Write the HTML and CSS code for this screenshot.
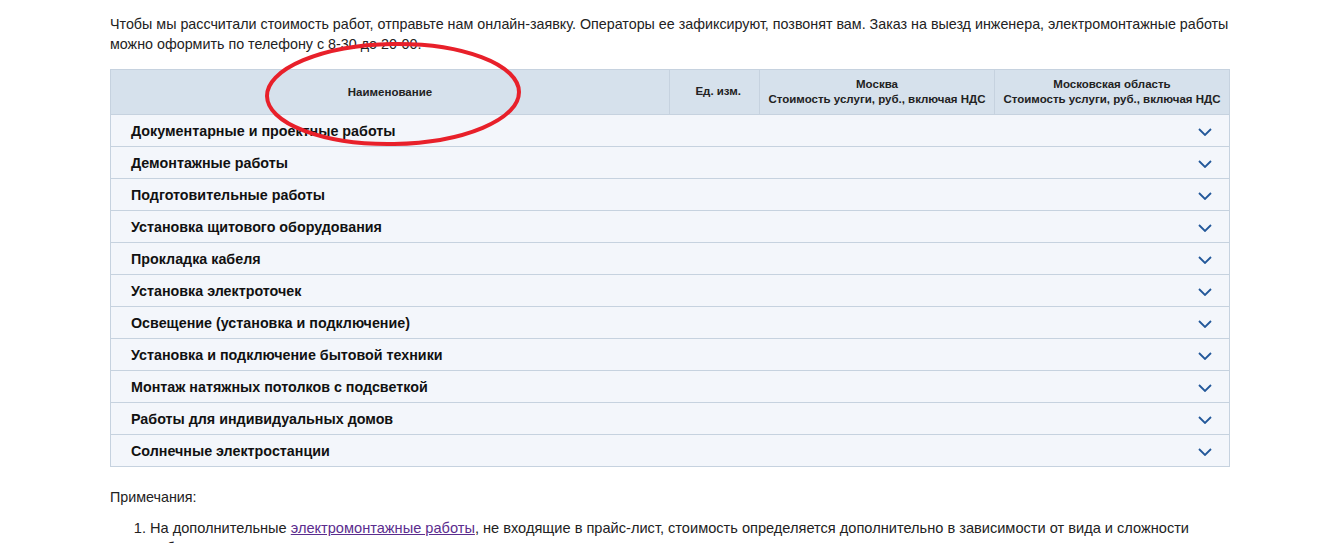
FILE: index.html
```html
<!DOCTYPE html>
<html lang="ru">
<head>
<meta charset="utf-8">
<title>Прайс-лист на электромонтажные работы</title>
<link rel="stylesheet" href="styles.css">
</head>
<body>
<main class="page">
  <p class="intro">Чтобы мы рассчитали стоимость работ, отправьте нам онлайн-заявку. Операторы ее зафиксируют, позвонят вам. Заказ на выезд инженера, электромонтажные работы можно оформить по телефону с 8-30 до 20-00.</p>

  <section class="price">
    <div class="price-head">
      <div class="th th-name">Наименование</div>
      <div class="th th-unit">Ед. изм.</div>
      <div class="th">Москва<br>Стоимость услуги, руб., включая НДС</div>
      <div class="th th-last">Московская область<br>Стоимость услуги, руб., включая НДС</div>
    </div>
    <div class="group"><span class="group-title">Документарные и проектные работы</span><svg class="chev" viewBox="0 0 14 8"><polyline points="1,1 7,7 13,1"/></svg></div>
    <div class="group"><span class="group-title">Демонтажные работы</span><svg class="chev" viewBox="0 0 14 8"><polyline points="1,1 7,7 13,1"/></svg></div>
    <div class="group"><span class="group-title">Подготовительные работы</span><svg class="chev" viewBox="0 0 14 8"><polyline points="1,1 7,7 13,1"/></svg></div>
    <div class="group"><span class="group-title">Установка щитового оборудования</span><svg class="chev" viewBox="0 0 14 8"><polyline points="1,1 7,7 13,1"/></svg></div>
    <div class="group"><span class="group-title">Прокладка кабеля</span><svg class="chev" viewBox="0 0 14 8"><polyline points="1,1 7,7 13,1"/></svg></div>
    <div class="group"><span class="group-title">Установка электроточек</span><svg class="chev" viewBox="0 0 14 8"><polyline points="1,1 7,7 13,1"/></svg></div>
    <div class="group"><span class="group-title">Освещение (установка и подключение)</span><svg class="chev" viewBox="0 0 14 8"><polyline points="1,1 7,7 13,1"/></svg></div>
    <div class="group"><span class="group-title">Установка и подключение бытовой техники</span><svg class="chev" viewBox="0 0 14 8"><polyline points="1,1 7,7 13,1"/></svg></div>
    <div class="group"><span class="group-title">Монтаж натяжных потолков с подсветкой</span><svg class="chev" viewBox="0 0 14 8"><polyline points="1,1 7,7 13,1"/></svg></div>
    <div class="group"><span class="group-title">Работы для индивидуальных домов</span><svg class="chev" viewBox="0 0 14 8"><polyline points="1,1 7,7 13,1"/></svg></div>
    <div class="group"><span class="group-title">Солнечные электростанции</span><svg class="chev" viewBox="0 0 14 8"><polyline points="1,1 7,7 13,1"/></svg></div>
  </section>

  <p class="notes-title">Примечания:</p>
  <ol class="notes">
    <li>На дополнительные <a href="#">электромонтажные работы</a>, не входящие в прайс-лист, стоимость определяется дополнительно в зависимости от вида и сложности работ, по согласованию с заказчиком.</li>
  </ol>

  <svg class="mark" viewBox="0 0 270 110" aria-hidden="true">
    <ellipse cx="135" cy="55" rx="126" ry="50" transform="rotate(-1 135 55)"/>
  </svg>
</main>
</body>
</html>
```

FILE: styles.css
```css
html, body {
  margin: 0;
  padding: 0;
  background: #fff;
}

body {
  font-family: "Liberation Sans", Arial, sans-serif;
  font-size: 14.3px;
  line-height: 20px;
  color: #222;
}

.page {
  position: relative;
  width: 1120px;
  margin-left: 110px;
  padding-top: 14px;
}

.intro {
  margin: 0 0 15px;
}

/* price table */
.price {
  border: 1px solid #c6d2df;
  border-bottom: 0;
}

.price-head {
  display: grid;
  grid-template-columns: 559px 90px 235px 1fr;
  background: #d6e1ec;
  border-bottom: 1px solid #c6d2df;
}

.th {
  box-sizing: border-box;
  display: flex;
  align-items: center;
  justify-content: center;
  min-height: 44px;
  font-size: 11.5px;
  font-weight: bold;
  line-height: 15px;
  text-align: center;
  border-right: 1px solid #c6d2df;
}

.th-name {
  padding-top: 1px;
}

.th-unit {
  justify-content: flex-end;
  padding-right: 18px;
  padding-bottom: 2px;
}

.th-last {
  border-right: 0;
}

.group {
  display: flex;
  align-items: center;
  justify-content: space-between;
  height: 31px;
  padding: 0 17px 0 20px;
  background: #f3f6fb;
  border-bottom: 1px solid #c6d2df;
}

.group-title {
  font-size: 14.3px;
  font-weight: bold;
  color: #111;
}

.chev {
  width: 14px;
  height: 8px;
  margin-top: 2px;
}

.chev polyline {
  fill: none;
  stroke: #23589a;
  stroke-width: 1.8;
}

/* notes */
.notes-title {
  margin: 20px 0 0;
}

.notes {
  margin: 11px 0 0;
  padding-left: 40px;
}

.notes li {
  font-size: 14.6px;
}

.notes a {
  color: #5b2d8e;
}

/* hand-drawn highlight over the first column heading */
.mark {
  position: absolute;
  left: 148px;
  top: 39px;
  width: 270px;
  height: 110px;
  overflow: visible;
}

.mark ellipse {
  fill: none;
  stroke: #e8202a;
  stroke-width: 4;
}
```
